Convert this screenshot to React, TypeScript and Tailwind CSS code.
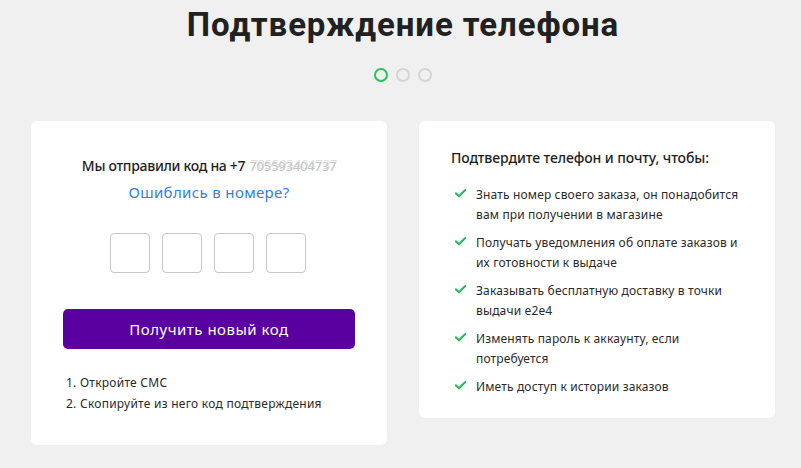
import React from "react";

const Check = () => (
  <svg width="11" height="9" viewBox="0 0 11 9" className="shrink-0 mt-[4px]">
    <path d="M1 4.5 L4 7.2 L10 1.3" fill="none" stroke="#1fbf56" strokeWidth="2.2" strokeLinecap="square" />
  </svg>
);

const items = [
  ["Знать номер своего заказа, он понадобится", "вам при получении в магазине"],
  ["Получать уведомления об оплате заказов и", "их готовности к выдаче"],
  ["Заказывать бесплатную доставку в точки", "выдачи e2e4"],
  ["Изменять пароль к аккаунту, если", "потребуется"],
  ["Иметь доступ к истории заказов"],
];

export default function App() {
  return (
    <div
      className="w-[801px] h-[468px] bg-[#f0f0f0] overflow-hidden text-[#1e1e1e]"
      style={{ fontFamily: '"Noto Sans", Roboto, sans-serif' }}
    >
      <div className="flex flex-col items-center pl-[5px]">
        <h1
          className="mt-[3px] text-[33px] leading-[44px] font-bold tracking-[0.9px] text-[#212121]"
          style={{ fontFamily: 'Roboto, "Noto Sans", sans-serif' }}
        >
          Подтверждение телефона
        </h1>
        <div className="mt-[21px] flex gap-[8px]">
          <span className="w-[14px] h-[14px] rounded-full border-2 border-[#22c55e]" />
          <span className="w-[14px] h-[14px] rounded-full border-2 border-[#d4d4d4]" />
          <span className="w-[14px] h-[14px] rounded-full border-2 border-[#d4d4d4]" />
        </div>
      </div>

      <div className="mt-[39px] pl-[31px] flex items-start gap-[32px]">
        {/* Left card */}
        <div className="w-[356px] h-[324px] bg-white rounded-[6px] flex flex-col items-center pt-[35px]">
          <div className="text-[14px] leading-[20px] font-medium tracking-[-0.3px] text-[#1e1e1e] flex items-baseline">
            <span>Мы отправили код на +7</span>
            <span
              className="ml-[4px] text-[13px] text-[#c4c4c4] font-normal tracking-[-0.2px]"
              style={{ textShadow: "1px -2px 0 rgba(200,200,200,0.6)" }}
            >
              705593404737
            </span>
          </div>
          <a className="mt-[6px] text-[15px] leading-[20px] tracking-[0.35px] text-[#2f7fe6]">
            Ошиблись в номере?
          </a>
          <div className="mt-[31px] flex gap-[12px] mr-[2px]">
            {[0, 1, 2, 3].map((i) => (
              <div key={i} className="w-[40px] h-[40px] rounded-[4px] border border-[#c8c8c8]" />
            ))}
          </div>
          <button className="mt-[36px] w-[292px] h-[40px] rounded-[5px] bg-[#5a00a0] text-white text-[15px] tracking-[0.5px]">
            Получить новый код
          </button>
          <div className="self-start ml-[35px] mt-[23px] text-[12px] leading-[21px] tracking-[0.25px] text-[#2a2a2a]">
            <div>1. Откройте СМС</div>
            <div>2. Скопируйте из него код подтверждения</div>
          </div>
        </div>

        {/* Right card */}
        <div className="w-[356px] h-[297px] bg-white rounded-[6px] pt-[27px] pl-[32px]">
          <div className="text-[14px] leading-[20px] font-medium tracking-[-0.1px] text-[#1e1e1e]">
            Подтвердите телефон и почту, чтобы:
          </div>
          <div className="mt-[17px] flex flex-col gap-[8px]">
            {items.map((lines, i) => (
              <div key={i} className="flex gap-[10px] pl-[4px]">
                <Check />
                <div className="text-[12px] leading-[20px] tracking-[0.15px] text-[#2a2a2a]">
                  {lines.map((l, j) => (
                    <div key={j}>{l}</div>
                  ))}
                </div>
              </div>
            ))}
          </div>
        </div>
      </div>
    </div>
  );
}
